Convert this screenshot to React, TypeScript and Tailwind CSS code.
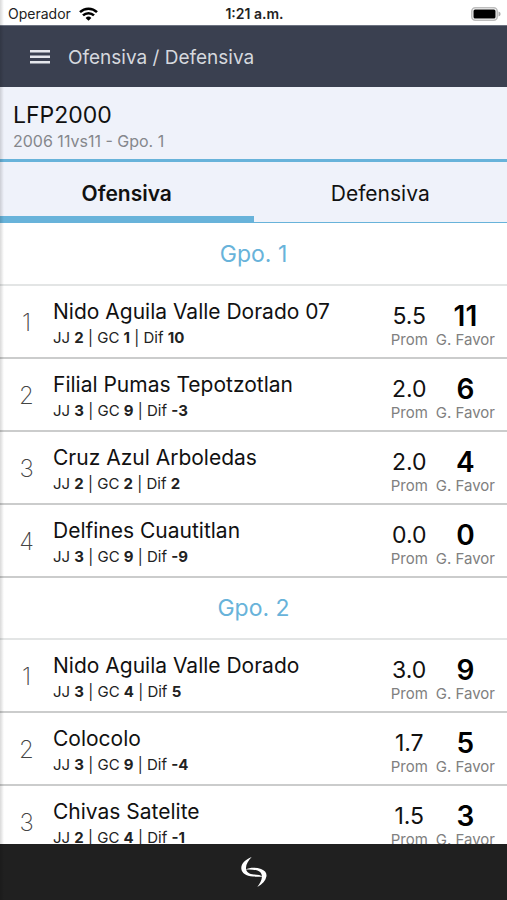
import { useState } from 'react'

type Team = {
  name: string
  jj: number
  gc: number
  dif: number
  prom: string
  favor: number
}

type Group = {
  name: string
  teams: Team[]
}

const tabs = ['Ofensiva', 'Defensiva']

const groups: Group[] = [
  {
    name: 'Gpo. 1',
    teams: [
      { name: 'Nido Aguila Valle Dorado 07', jj: 2, gc: 1, dif: 10, prom: '5.5', favor: 11 },
      { name: 'Filial Pumas Tepotzotlan', jj: 3, gc: 9, dif: -3, prom: '2.0', favor: 6 },
      { name: 'Cruz Azul Arboledas', jj: 2, gc: 2, dif: 2, prom: '2.0', favor: 4 },
      { name: 'Delfines Cuautitlan', jj: 3, gc: 9, dif: -9, prom: '0.0', favor: 0 },
    ],
  },
  {
    name: 'Gpo. 2',
    teams: [
      { name: 'Nido Aguila Valle Dorado', jj: 3, gc: 4, dif: 5, prom: '3.0', favor: 9 },
      { name: 'Colocolo', jj: 3, gc: 9, dif: -4, prom: '1.7', favor: 5 },
      { name: 'Chivas Satelite', jj: 2, gc: 4, dif: -1, prom: '1.5', favor: 3 },
    ],
  },
]

function StatusBar() {
  return (
    <div className="grid h-[25px] shrink-0 grid-cols-3 items-center bg-white pt-0.5 pr-1.5 pl-2 text-sm text-[#222]">
      <div className="flex items-center gap-2">
        <span>Operador</span>
        <svg width="19" height="14" viewBox="0 0 19 14" fill="none" stroke="#000" strokeWidth="2.5" aria-hidden="true">
          <path d="M1 5.1a12.2 12.2 0 0 1 17 0" />
          <path d="M4 8.4a7.8 7.8 0 0 1 11 0" />
          <path d="M9.5 13.8 6.6 10.9a4.1 4.1 0 0 1 5.8 0z" fill="#000" stroke="none" />
        </svg>
      </div>
      <span className="text-center font-semibold">1:21 a.m.</span>
      <svg className="justify-self-end" width="30" height="14" viewBox="0 0 30 14" aria-hidden="true">
        <rect x="0.8" y="0.8" width="25.4" height="12.4" rx="3.5" fill="#fff" stroke="#bdbdbd" strokeWidth="1.6" />
        <rect x="2.5" y="2.5" width="22" height="9" rx="1.5" fill="#000" />
        <path d="M27.5 4.5c1.6.5 2 1.5 2 2.5s-.4 2-2 2.5z" fill="#aaa" />
      </svg>
    </div>
  )
}

function Logo() {
  return (
    <svg width="26" height="32" viewBox="0 0 26 32" fill="#fff" aria-hidden="true">
      <path d="M10.7 1C4 3.5 0 8 .3 12.5.6 17 5 20.3 12 20.6c4 .2 7 0 9.3.3C20 19 17 18.600 13 18.400 8.500 18 5.300 16.600 5 12.500 4.700 8.500 7.500 4.500 10.700 1z" />
      <path d="M4.500 13.500C9 11.300 15 11.300 20 13c4 1.500 6 4 5.400 7.500-.7 4-3.900 7.500-9.100 10.500 2.500-3.500 4.500-6.500 4.600-10 .1-3.200-1.400-5.200-4.400-6.400-3.500-1.300-7.500-1.300-12-1.100z" />
    </svg>
  )
}

function TeamRow({ team, position }: { team: Team; position: number }) {
  return (
    <li className="flex h-[73px] items-start border-b-2 border-[#cbcccc] pr-3">
      <span className="w-[53px] pt-[21px] text-center text-2xl leading-8 font-extralight text-[#444]">
        {position}
      </span>
      <div className="min-w-0 flex-1 pt-3">
        <h3 className="truncate text-[21px] leading-7 text-[#111]">{team.name}</h3>
        <p className="text-[15px] leading-6 text-[#222]">
          JJ <b>{team.jj}</b> | GC <b>{team.gc}</b> | Dif <b>{team.dif}</b>
        </p>
      </div>
      <div className="flex gap-2 pt-4 text-center">
        <div>
          <div className="text-[23px] leading-7 text-[#111]">{team.prom}</div>
          <div className="text-[15px] leading-5 text-[#808080]">Prom</div>
        </div>
        <div>
          <div className="text-[28px] leading-7 font-semibold text-black">{team.favor}</div>
          <div className="text-[15px] leading-5 text-[#808080]">G. Favor</div>
        </div>
      </div>
    </li>
  )
}

export default function App() {
  const [activeTab, setActiveTab] = useState('Ofensiva')

  return (
    <div className="relative flex h-screen flex-col bg-white font-['Inter','Liberation_Sans',sans-serif]">
      <StatusBar />

      {/* Navigation bar */}
      <header className="flex h-[62px] shrink-0 items-center gap-4 border-t border-[#6c7280] bg-[#3a4050] px-7 text-[#d5d8de]">
        <button aria-label="Menú" className="flex h-6 w-6 items-center justify-center">
          <svg width="20" height="14" viewBox="0 0 20 14" fill="#e4e6eb" aria-hidden="true">
            <path d="M0 0h20v2.500H0zM0 5.500h20v2.500H0zM0 11h20v2.500H0z" />
          </svg>
        </button>
        <h1 className="pt-0.5 text-[19px] leading-8">Ofensiva / Defensiva</h1>
      </header>

      {/* Tournament */}
      <section className="shrink-0 border-b-3 border-[#68b3da] bg-[#eff2fa] px-[13px] pt-3 pb-2">
        <h2 className="text-[23px] leading-8 text-[#111]">LFP2000</h2>
        <p className="text-base leading-5 text-[#85878c]">2006 11vs11 - Gpo. 1</p>
      </section>

      <div role="tablist" className="flex h-[61px] shrink-0 bg-[#eff2fa]">
        {tabs.map((tab) => (
          <button
            key={tab}
            role="tab"
            aria-selected={activeTab === tab}
            onClick={() => setActiveTab(tab)}
            className={`flex flex-1 justify-center border-[#68b3da] pt-4 text-[21px] leading-8 text-[#111] ${
              activeTab === tab ? 'border-b-7 font-semibold' : 'border-b'
            }`}
          >
            {tab}
          </button>
        ))}
      </div>

      {/* Standings */}
      <main className="min-h-0 flex-1 overflow-y-auto pt-px [scrollbar-width:none]">
        {groups.map((group) => (
          <section key={group.name}>
            <h2 className="flex h-[62px] items-center justify-center border-b-2 border-[#e3e5e5] text-[23px] text-[#68b3da]">
              {group.name}
            </h2>
            <ol>
              {group.teams.map((team, i) => (
                <TeamRow key={team.name} team={team} position={i + 1} />
              ))}
            </ol>
          </section>
        ))}
      </main>

      <footer className="flex h-14 shrink-0 items-center justify-center bg-[#202020]">
        <Logo />
      </footer>

      {/* Edge shadow of the closed side menu */}
      <div className="pointer-events-none absolute inset-y-0 left-0 w-1 bg-linear-to-r from-black/15 to-transparent" />
    </div>
  )
}
